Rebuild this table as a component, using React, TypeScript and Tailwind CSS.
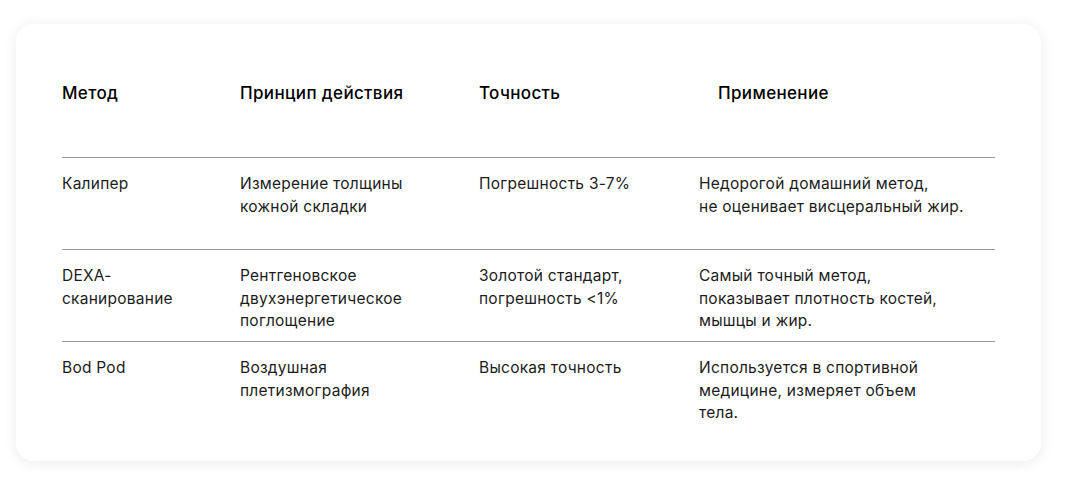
import React from 'react';

const rows = [
    {
        method: ['Калипер'],
        principle: ['Измерение толщины', 'кожной складки'],
        accuracy: ['Погрешность 3-7%'],
        usage: ['Недорогой домашний метод,', 'не оценивает висцеральный жир.'],
    },
    {
        method: ['DEXA-', 'сканирование'],
        principle: ['Рентгеновское', 'двухэнергетическое', 'поглощение'],
        accuracy: ['Золотой стандарт,', 'погрешность <1%'],
        usage: ['Самый точный метод,', 'показывает плотность костей,', 'мышцы и жир.'],
    },
    {
        method: ['Bod Pod'],
        principle: ['Воздушная', 'плетизмография'],
        accuracy: ['Высокая точность'],
        usage: ['Используется в спортивной', 'медицине, измеряет объем', 'тела.'],
    },
];

const Lines: React.FC<{ lines: string[] }> = ({ lines }) => (
    <div>
        {lines.map((l) => (
            <div key={l}>{l}</div>
        ))}
    </div>
);

const App: React.FC = () => {
    return (
        <div className="bg-white min-h-screen pt-6 pl-4 w-[1065px] font-['Inter',sans-serif]">
            <div className="w-[1025px] h-[437px] bg-white rounded-[18px] shadow-[0_2px_14px_rgba(0,0,0,0.08)] px-[46px] pt-[58px]">
                {/* Header */}
                <div className="grid grid-cols-[178px_239px_220px_296px] h-[76px] text-[17px] leading-[22px] tracking-[0.35px] font-medium text-black border-b border-[#9a9a9a]">
                    <div>Метод</div>
                    <div>Принцип действия</div>
                    <div>Точность</div>
                    <div className="pl-[19px]">Применение</div>
                </div>

                {/* Rows */}
                {rows.map((r, i) => (
                    <div
                        key={r.method[0]}
                        className={`grid grid-cols-[178px_239px_220px_296px] pt-[15px] text-[15.5px] leading-[22.5px] tracking-[0.25px] text-[#1c1c1c] ${
                            i < rows.length - 1 ? 'h-[92px] border-b border-[#9a9a9a]' : ''
                        }`}
                    >
                        <Lines lines={r.method} />
                        <Lines lines={r.principle} />
                        <Lines lines={r.accuracy} />
                        <Lines lines={r.usage} />
                    </div>
                ))}
            </div>
        </div>
    );
};

export default App;
